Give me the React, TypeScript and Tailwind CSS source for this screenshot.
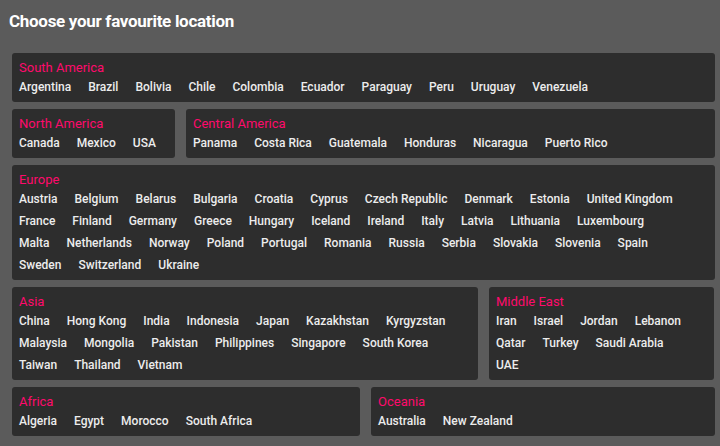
import React from "react";

type Region = { name: string; rows: string[][] };

const sa: Region = { name: "South America", rows: [["Argentina", "Brazil", "Bolivia", "Chile", "Colombia", "Ecuador", "Paraguay", "Peru", "Uruguay", "Venezuela"]] };
const na: Region = { name: "North America", rows: [["Canada", "Mexico", "USA"]] };
const ca: Region = { name: "Central America", rows: [["Panama", "Costa Rica", "Guatemala", "Honduras", "Nicaragua", "Puerto Rico"]] };
const eu: Region = {
  name: "Europe",
  rows: [
    ["Austria", "Belgium", "Belarus", "Bulgaria", "Croatia", "Cyprus", "Czech Republic", "Denmark", "Estonia", "United Kingdom"],
    ["France", "Finland", "Germany", "Greece", "Hungary", "Iceland", "Ireland", "Italy", "Latvia", "Lithuania", "Luxembourg"],
    ["Malta", "Netherlands", "Norway", "Poland", "Portugal", "Romania", "Russia", "Serbia", "Slovakia", "Slovenia", "Spain"],
    ["Sweden", "Switzerland", "Ukraine"],
  ],
};
const asia: Region = {
  name: "Asia",
  rows: [
    ["China", "Hong Kong", "India", "Indonesia", "Japan", "Kazakhstan", "Kyrgyzstan"],
    ["Malaysia", "Mongolia", "Pakistan", "Philippines", "Singapore", "South Korea"],
    ["Taiwan", "Thailand", "Vietnam"],
  ],
};
const me: Region = {
  name: "Middle East",
  rows: [
    ["Iran", "Israel", "Jordan", "Lebanon"],
    ["Qatar", "Turkey", "Saudi Arabia"],
    ["UAE"],
  ],
};
const af: Region = { name: "Africa", rows: [["Algeria", "Egypt", "Morocco", "South Africa"]] };
const oc: Region = { name: "Oceania", rows: [["Australia", "New Zealand"]] };

function Box({ r, className = "" }: { r: Region; className?: string }) {
  return (
    <div className={"bg-[#2d2d2d] rounded-[3px] pl-[7px] pr-[7px] pt-[6px] pb-[4px] " + className}>
      <div className="text-[13px] leading-[17px] text-[#ff0a6c]">{r.name}</div>
      <div className="flex flex-col text-[12px] leading-[22px] font-medium text-[#ececec]">
        {r.rows.map((row, i) => (
          <div key={i} className="flex gap-x-[17px] whitespace-nowrap">
            {row.map((c) => (
              <span key={c}>{c}</span>
            ))}
          </div>
        ))}
      </div>
    </div>
  );
}

export default function App() {
  return (
    <div className="w-[720px] h-[446px] bg-[#5b5b5b] overflow-hidden" style={{ fontFamily: "Roboto, 'Noto Sans', sans-serif" }}>
      <div className="pl-[9px] pt-[10px] h-[53px] text-[17px] leading-[22px] font-bold text-white tracking-[-0.3px]">
        Choose your favourite location
      </div>
      <div className="flex flex-col gap-[7px] pl-[12px] pr-[5px]">
        <Box r={sa} />
        <div className="flex gap-[11px]">
          <Box r={na} className="w-[163px] shrink-0" />
          <Box r={ca} className="flex-1" />
        </div>
        <Box r={eu} />
        <div className="flex gap-[11px]">
          <Box r={asia} className="w-[466px] shrink-0" />
          <Box r={me} className="flex-1 mr-[1px]" />
        </div>
        <div className="flex gap-[11px]">
          <Box r={af} className="w-[348px] shrink-0" />
          <Box r={oc} className="flex-1" />
        </div>
      </div>
    </div>
  );
}
